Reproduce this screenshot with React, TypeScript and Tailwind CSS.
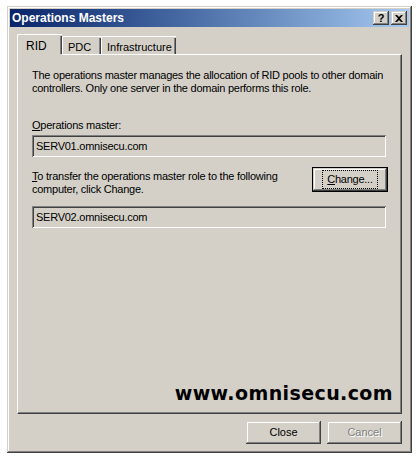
import React from "react";

const raised =
  "shadow-[inset_-1px_-1px_#404040,inset_1px_1px_#d4d0c8,inset_-2px_-2px_#808080,inset_2px_2px_#ffffff]";
const sunken =
  "shadow-[inset_1px_1px_#808080,inset_-1px_-1px_#ffffff,inset_2px_2px_#404040,inset_-2px_-2px_#d4d0c8]";

function TitleBtn({ children }: { children: React.ReactNode }) {
  return (
    <div
      className={`w-[16px] h-[14px] bg-[#d4d0c8] ${raised} flex items-center justify-center text-black font-bold text-[11px] leading-none`}
    >
      {children}
    </div>
  );
}

export default function App() {
  const font = "font-['Liberation_Sans',Arial,sans-serif]";
  return (
    <div className={`w-[419px] h-[462px] bg-white pt-[6px] pl-[7px] ${font}`}>
      <div
        className={`w-[405px] h-[447px] bg-[#d4d0c8] p-[3px] flex flex-col ${raised}`}
      >
        {/* title bar */}
        <div className="h-[18px] bg-gradient-to-r from-[#0a246a] to-[#a6caf0] flex items-center pl-[2px] pr-[2px]">
          <span className="text-white font-bold text-[12px] flex-1">
            Operations Masters
          </span>
          <div className="flex gap-[2px]">
            <TitleBtn>?</TitleBtn>
            <TitleBtn>
              <svg width="8" height="7" viewBox="0 0 8 7">
                <path d="M0 0h2l2 2 2-2h2L5 3.5 8 7H6L4 5 2 7H0l3-3.5z" fill="#000" />
              </svg>
            </TitleBtn>
          </div>
        </div>

        {/* content */}
        <div className="flex flex-col px-[7px] pt-[6px] text-[11px] text-black tracking-[-0.25px]">
          {/* tabs */}
          <div className="flex items-end h-[21px] relative z-10 tracking-normal">
            <div className="w-[45px] h-[21px] bg-[#d4d0c8] border-l border-t border-white relative mb-[-1px] rounded-tl-[2px]">
              <div className="absolute right-0 top-[1px] bottom-[1px] w-[1px] bg-[#404040]" />
              <div className="absolute right-[1px] top-[1px] bottom-[1px] w-[1px] bg-[#808080]" />
              <span className="absolute left-[8px] top-[2px] text-[12px]">RID</span>
            </div>
            <div className="w-[39px] h-[18px] border-l border-t border-white relative rounded-tl-[2px]">
              <div className="absolute right-0 top-[1px] bottom-0 w-[1px] bg-[#404040]" />
              <div className="absolute right-[1px] top-[1px] bottom-0 w-[1px] bg-[#808080]" />
              <span className="absolute left-[5px] top-[2px]">PDC</span>
            </div>
            <div className="w-[75px] h-[18px] border-l border-t border-white relative rounded-tl-[2px]">
              <div className="absolute right-0 top-[1px] bottom-0 w-[1px] bg-[#404040]" />
              <div className="absolute right-[1px] top-[1px] bottom-0 w-[1px] bg-[#808080]" />
              <span className="absolute left-[5px] top-[2px]">Infrastructure</span>
            </div>
          </div>

          {/* panel */}
          <div
            className={`h-[360px] bg-[#d4d0c8] border-l border-t border-white border-r border-b border-r-[#404040] border-b-[#404040] flex flex-col pl-[14px] pr-[12px] pt-[14px] relative`}
          >
            <div className="absolute inset-y-0 right-0 w-[1px] bg-[#808080]" />
            <div className="absolute inset-x-0 bottom-0 h-[1px] bg-[#808080]" />
            <p className="leading-[13px]">
              The operations master manages the allocation of RID pools to other domain
              controllers. Only one server in the domain performs this role.
            </p>
            <p className="mt-[24px] leading-[13px] first-letter:underline">
              Operations master:
            </p>
            <div className={`mt-[3px] h-[22px] ${sunken} flex items-center px-[4px] mr-[3px]`}>
              SERV01.omnisecu.com
            </div>
            <div className="mt-[13px] flex justify-between items-start mr-[2px]">
              <p className="leading-[13px] w-[270px] first-letter:underline">
                To transfer the operations master role to the following computer, click Change.
              </p>
              <div
                className={`w-[74px] h-[23px] mt-[-2px] ${raised} flex items-center justify-center outline outline-1 outline-black`}
              >
                <span className="block outline outline-1 outline-dotted outline-black px-[4px] first-letter:underline">
                  Change...
                </span>
              </div>
            </div>
            <div className={`mt-[10px] h-[22px] ${sunken} flex items-center px-[4px] mr-[3px]`}>
              SERV02.omnisecu.com
            </div>
            <div className="flex-1" />
            <div className="flex justify-end pb-[10px] mr-[-4px] tracking-normal">
              <span className="font-['DejaVu_Sans',sans-serif] font-bold text-[19px] tracking-[0.4px] leading-none">
                www.omnisecu.com
              </span>
            </div>
          </div>

          {/* bottom buttons */}
          <div className="flex justify-end gap-[6px] mt-[7px] pr-[0px] tracking-normal">
            <div className={`w-[75px] h-[23px] ${raised} flex items-center justify-center`}>Close</div>
            <div className={`w-[75px] h-[23px] ${raised} flex items-center justify-center text-[#808080] [text-shadow:1px_1px_#fff]`}>
              Cancel
            </div>
          </div>
        </div>
      </div>
    </div>
  );
}
